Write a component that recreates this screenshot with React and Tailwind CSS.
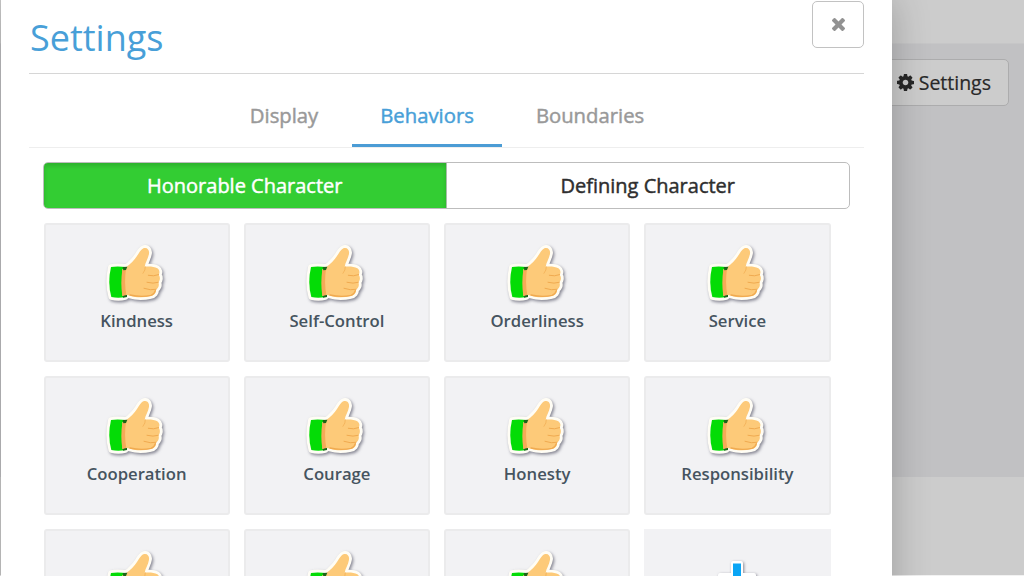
import React, { useState } from "react";

const TABS = ["Display", "Behaviors", "Boundaries"];

const GROUPS = ["Honorable Character", "Defining Character"];

const BEHAVIORS = [
  { id: 1, label: "Kindness" },
  { id: 2, label: "Self-Control" },
  { id: 3, label: "Orderliness" },
  { id: 4, label: "Service" },
  { id: 5, label: "Cooperation" },
  { id: 6, label: "Courage" },
  { id: 7, label: "Honesty" },
  { id: 8, label: "Responsibility" },
  { id: 9 },
  { id: 10 },
  { id: 11 },
];

const CogIcon = ({ className }) => (
  <svg viewBox="0 128 1536 1536" fill="currentColor" className={className}>
    <path d="M1024 896q0-106-75-181t-181-75-181 75-75 181 75 181 181 75 181-75 75-181zm512-109v222q0 12-8 23t-20 13l-185 28q-19 54-39 91 35 50 107 138 10 12 10 25t-9 23q-27 37-99 108t-94 71q-12 0-26-9l-138-108q-44 23-91 38-16 136-29 186-7 28-36 28h-222q-14 0-24.5-8.5t-11.5-21.5l-28-184q-49-16-90-37l-141 107q-10 9-25 9-14 0-25-11-126-114-165-168-7-10-7-23 0-12 8-23 15-21 51-66.5t54-70.5q-27-50-41-99l-183-27q-13-2-21-12.5t-8-23.5v-222q0-12 8-23t19-13l186-28q14-46 39-92-40-57-107-138-10-12-10-24 0-10 9-23 26-36 98.5-107.5t94.5-71.5q13 0 26 10l138 107q44-23 91-38 16-136 29-186 7-28 36-28h222q14 0 24.5 8.5t11.5 21.5l28 184q49 16 90 37l142-107q9-9 24-9 13 0 25 10 129 119 165 170 7 8 7 22 0 12-8 23-15 21-51 66.5t-54 70.5q26 50 41 98l183 28q13 2 21 12.5t8 23.5z" />
  </svg>
);

const CloseIcon = ({ className }) => (
  <svg viewBox="110 366 1188 1188" fill="currentColor" className={className}>
    <path d="M1298 1322q0 40-28 68l-136 136q-28 28-68 28t-68-28l-294-294-294 294q-28 28-68 28t-68-28l-136-136q-28-28-28-68t28-68l294-294-294-294q-28-28-28-68t28-68l136-136q28-28 68-28t68 28l294 294 294-294q28-28 68-28t68 28l136 136q28 28 28 68t-28 68l-294 294 294 294q28 28 28 68z" />
  </svg>
);

const HAND =
  "M85 100C100 92 112 82 123 68C133 57 137 43 148 37C159 32 167 42 165 53C163 67 154 79 152 92C164 91 181 91 190 97C197 102 198 110 194 116C200 124 198 134 193 139C197 148 193 157 186 161C187 170 181 178 170 180C150 185 127 185 108 179C99 176 92 177 85 180Z";
const CUFF = "M51 93Q72 89 99 94L94 183Q73 188 52 183Q40 140 51 93Z";

const ThumbIcon = ({ className }) => (
  <svg viewBox="0 0 255 225" className={className}>
    <g stroke="#fffdf5" strokeWidth="17" strokeLinejoin="round" className="drop-shadow-[4px_5px_4px_rgba(60,60,80,0.6)]">
      <path d={CUFF} fill="#fffdf5" />
      <path d={HAND} fill="#fffdf5" />
    </g>
    <path d={CUFF} fill="#04dc06" />
    <path d="M86 176L99 175L99 183L87 185Z" fill="#1c6518" />
    <path d={HAND} fill="#fdca79" />
    <path d="M85 101Q92 97 96 98Q90 138 97 177Q91 177 85 180Q79 140 85 101Z" fill="#f5ab57" />
    <path d="M86 93L100 92L96 102L88 103Z" fill="#1c6518" />
    <g fill="none" stroke="#f0aa50" strokeLinecap="round" strokeLinejoin="round">
      <path d="M154 92Q155 102 147 112" strokeWidth="2" />
      <path d="M194 116Q179 122 163 118" strokeWidth="3" />
      <path d="M193 139Q178 144 159 139" strokeWidth="3" />
      <path d="M186 160Q170 164 150 157" strokeWidth="3" />
      <path d="M108 177Q143 185 171 178Q181 175 184 164" strokeWidth="4" />
    </g>
  </svg>
);

const PlusIcon = ({ className }) => (
  <svg viewBox="0 0 60 60" className={className}>
    <g fill="#fff" stroke="#fff" strokeWidth="4" strokeLinejoin="round" className="drop-shadow-[1px_1px_1.5px_rgba(60,60,80,0.6)]">
      <path d="M26 5h8v21h20v8H34v20h-8V34H6v-8h20z" />
      <path d="M13 17h34v26H13z" />
    </g>
    <path d="M26 5.500h8v20.500h20v8H34v20h-8V34H6v-8h20z" fill="#0aa5f5" />
  </svg>
);

const BehaviorCard = ({ label }) => (
  <button className="flex h-[139px] flex-col items-center rounded-[3px] border-2 border-[#ebebec] bg-[#f2f2f4] pt-[11px]">
    <ThumbIcon className="h-[75px] w-[85px] shrink-0" />
    {label && (
      <span className="-mt-[2px] text-[16.700px] leading-6 font-semibold text-[#46545f]">{label}</span>
    )}
  </button>
);

export default function App() {
  const [tab, setTab] = useState("Behaviors");
  const [group, setGroup] = useState(GROUPS[0]);

  return (
    <div className="relative flex h-[576px] w-[1024px] flex-col overflow-hidden bg-[#cccccc] font-['Open_Sans',sans-serif]">
      {/* Dimmed page */}
      <div className="h-11 shrink-0 border-b border-[#c6c6c7]" />
      <main className="flex h-[433px] shrink-0 items-start justify-end bg-[#c1c1c3] pt-[15px] pr-[15px]">
        <button className="flex h-[47px] items-center rounded-[5px] border-[1.5px] border-[#acacad] bg-[#cccccc] pr-[17px] pl-5 text-[19.500px] text-[#282828] [-webkit-text-stroke:0.2px_#282828]">
          <CogIcon className="mr-[5px] h-[17px] w-[17px]" />
          Settings
        </button>
      </main>
      <div className="flex-1 border-b border-[#f2f2f2]" />

      {/* Settings dialog */}
      <section className="absolute top-0 left-px h-[640px] w-[891px] bg-white px-[28px] shadow-[0_0_36px_rgba(0,0,0,0.24)]">
        <header className="flex h-[74px] items-start justify-between border-b border-[#d6d6d6]">
          <h1 className="pt-[10px] pl-px text-[36px] leading-[56px] text-[#489fd8]">Settings</h1>
          <button className="mt-px flex h-[47px] w-[52px] items-center justify-center rounded-[5px] border border-[#c2c2c2] text-[#929292]">
            <CloseIcon className="h-[13px] w-[13px]" />
          </button>
        </header>

        <nav className="flex h-[74px] items-end justify-center border-b border-[#eeeeee] pl-px">
          {TABS.map((name) => (
            <button
              key={name}
              onClick={() => setTab(name)}
              className={
                tab === name
                  ? "h-[60px] border-b-[3px] border-[#4b9cd5] px-7 text-[20.300px] text-[#489fd8] [-webkit-text-stroke:0.45px_#489fd8]"
                  : "h-[60px] border-b-[3px] border-transparent px-[34px] text-[20.300px] text-[#999999] [-webkit-text-stroke:0.45px_#999999]"
              }
            >
              {name}
            </button>
          ))}
        </nav>

        <div className="mx-[14px] mt-[14px] grid h-[47px] grid-cols-2 overflow-hidden rounded-[5px] border border-[#bdbdbd]">
          {GROUPS.map((name) => (
            <button
              key={name}
              onClick={() => setGroup(name)}
              className={
                group === name
                  ? "border-r border-[#a9bda9] bg-[#33cd33] text-xl text-white shadow-[inset_0_3px_4px_rgba(0,0,0,0.14)] [-webkit-text-stroke:0.45px_#ffffff]"
                  : "text-xl text-[#2e2e2e] [-webkit-text-stroke:0.45px_#2e2e2e]"
              }
            >
              {name}
            </button>
          ))}
        </div>

        <div className="mt-[14px] ml-[14.500px] grid w-[787px] grid-cols-4 gap-[14px]">
          {BEHAVIORS.map((b) => (
            <BehaviorCard key={b.id} label={b.label} />
          ))}
          <button className="flex h-[139px] flex-col items-center bg-[#f2f2f4] pt-[29px]">
            <PlusIcon className="h-[60px] w-[60px] shrink-0" />
          </button>
        </div>
      </section>
    </div>
  );
}
